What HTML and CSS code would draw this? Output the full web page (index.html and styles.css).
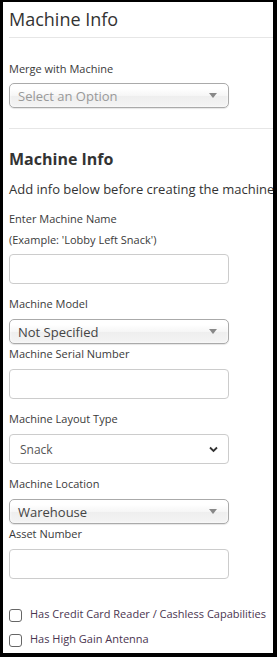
FILE: index.html
```html
<!DOCTYPE html>
<html>
<head>
<meta charset="utf-8">
<link rel="stylesheet" href="styles.css">
</head>
<body>
<div class="frame">
  <h1 class="title">Machine Info</h1>
  <hr class="rule rule-top">
  <div class="label label-merge">Merge with Machine</div>
  <div class="chosen chosen-merge"><span class="placeholder">Select an Option</span><span class="tri"></span></div>
  <hr class="rule rule-mid">
  <h2 class="heading">Machine Info</h2>
  <p class="intro">Add info below before creating the machine.</p>
  <div class="label label-name">Enter Machine Name</div>
  <div class="label label-example">(Example: 'Lobby Left Snack')</div>
  <div class="input"></div>
  <div class="label label-after-input">Machine Model</div>
  <div class="chosen"><span class="value">Not Specified</span><span class="tri"></span></div>
  <div class="label label-after-select">Machine Serial Number</div>
  <div class="input"></div>
  <div class="label label-after-input">Machine Layout Type</div>
  <div class="native"><span>Snack</span>
    <svg class="chev" width="9" height="7" viewBox="0 0 9 7"><path d="M1 1.5 L4.5 5 L8 1.5" fill="none" stroke="#333" stroke-width="1.8"/></svg>
  </div>
  <div class="label label-after-input">Machine Location</div>
  <div class="chosen"><span class="value">Warehouse</span><span class="tri"></span></div>
  <div class="label label-after-select">Asset Number</div>
  <div class="input"></div>
  <label class="check check-first"><span class="box"></span><span class="check-text">Has Credit Card Reader / Cashless Capabilities</span></label>
  <label class="check check-second"><span class="box"></span><span class="check-text">Has High Gain Antenna</span></label>
</div>
</body>
</html>
```

FILE: styles.css
```css
html, body {
  margin: 0;
  padding: 0;
  background: #000;
}
body {
  width: 277px;
  height: 657px;
  overflow: hidden;
}
.frame {
  box-sizing: border-box;
  width: 277px;
  height: 657px;
  border-style: solid;
  border-color: #000;
  border-width: 2px 4px 4px 3px;
  background: #fff;
  padding-left: 6px;
  font-family: "Open Sans", "Liberation Sans", sans-serif;
  color: #333;
  overflow: hidden;
}
.title {
  margin: 0;
  font-size: 18px;
  font-weight: 400;
  line-height: 26px;
  height: 26px;
  padding-top: 4px;
  color: #333;
}
.rule {
  border: 0;
  height: 1px;
  background: #e6e6e6;
  margin: 0;
}
.rule-top { margin-top: 5px; }
.label {
  font-size: 11px;
  line-height: 15px;
  height: 15px;
  color: #3a3a3a;
  white-space: nowrap;
}
.label-merge { margin-top: 23px; }
.chosen {
  box-sizing: border-box;
  width: 220px;
  height: 25px;
  margin-top: 8px;
  border: 1px solid #aaa;
  border-radius: 5px;
  background: linear-gradient(#fff 20%, #f6f6f6 50%, #eee 52%, #f4f4f4 100%);
  box-shadow: inset 0 0 3px #fff, 0 1px 1px rgba(0,0,0,0.1);
  display: flex;
  align-items: center;
  justify-content: space-between;
  padding: 0 11px 0 8px;
  font-size: 13px;
}
.chosen-merge { margin-top: 7px; }
.placeholder { color: #999; }
.value { color: #444; }
.tri {
  width: 0;
  height: 0;
  border-left: 4px solid transparent;
  border-right: 4px solid transparent;
  border-top: 5px solid #888;
}
.rule-mid { margin-top: 20px; }
.heading {
  margin: 19px 0 0;
  font-size: 16px;
  font-weight: 700;
  line-height: 22px;
  height: 22px;
  color: #333;
}
.intro {
  margin: 10px 0 0;
  font-size: 13px;
  line-height: 18px;
  white-space: nowrap;
  color: #333;
}
.label-name { margin-top: 13px; }
.label-example { margin-top: 6px; }
.input {
  box-sizing: border-box;
  width: 220px;
  height: 30px;
  margin-top: 7px;
  border: 1px solid #ccc;
  border-radius: 4px;
  background: #fff;
}
.label-after-input { margin-top: 12px; }
.label-after-select { margin-top: 2px; }
.label-after-select + .input { margin-top: 8px; }
.native {
  box-sizing: border-box;
  width: 220px;
  height: 30px;
  margin-top: 8px;
  border: 1px solid #ccc;
  border-radius: 4px;
  display: flex;
  align-items: center;
  justify-content: space-between;
  padding: 0 10px 0 10px;
  font-size: 12px;
  color: #555;
}
.chev { display: block; }
.check {
  display: flex;
  align-items: flex-start;
  font-size: 11px;
  line-height: 15px;
  height: 15px;
  white-space: nowrap;
}
.check-first { margin-top: 27px; }
.check-second { margin-top: 10px; }
.box {
  box-sizing: border-box;
  width: 13px;
  height: 13px;
  margin-top: 3px;
  border: 1px solid #666;
  border-radius: 3px;
  background: #fff;
  flex: none;
}
.check-text {
  margin-left: 8px;
  color: #4a3550;
}
```
